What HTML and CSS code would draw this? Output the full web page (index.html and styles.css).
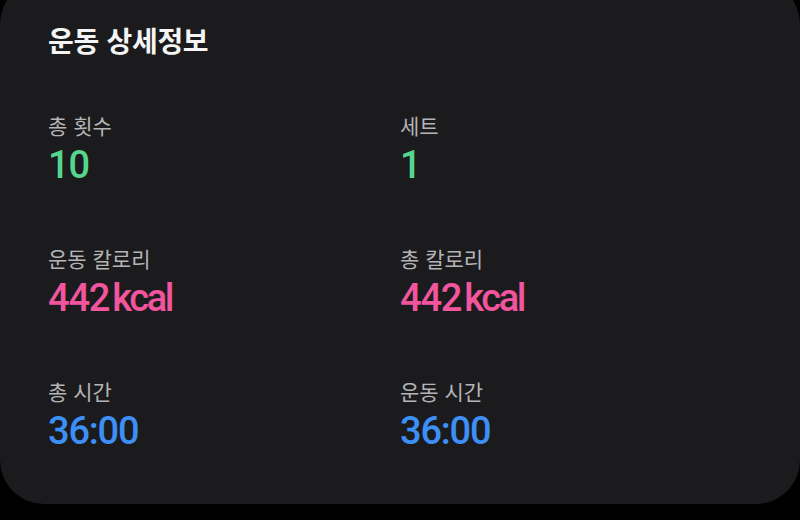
FILE: index.html
```html
<!DOCTYPE html>
<html lang="ko">
<head>
<meta charset="utf-8">
<title>운동 상세정보</title>
<link rel="stylesheet" href="styles.css">
</head>
<body>
  <section class="card">
    <h1 class="card-title">운동 상세정보</h1>
    <div class="stats">
      <div class="stat">
        <div class="stat-label">총 횟수</div>
        <div class="stat-value green">10</div>
      </div>
      <div class="stat">
        <div class="stat-label">세트</div>
        <div class="stat-value green">1</div>
      </div>
      <div class="stat">
        <div class="stat-label">운동 칼로리</div>
        <div class="stat-value pink">442<span class="unit">kcal</span></div>
      </div>
      <div class="stat">
        <div class="stat-label">총 칼로리</div>
        <div class="stat-value pink">442<span class="unit">kcal</span></div>
      </div>
      <div class="stat">
        <div class="stat-label">총 시간</div>
        <div class="stat-value blue">36:00</div>
      </div>
      <div class="stat">
        <div class="stat-label">운동 시간</div>
        <div class="stat-value blue">36:00</div>
      </div>
    </div>
  </section>
</body>
</html>
```

FILE: styles.css
```css
html, body {
  margin: 0;
  padding: 0;
  background: #000;
}

body {
  width: 800px;
  height: 520px;
  overflow: hidden;
  font-family: "Noto Sans CJK KR", "Noto Sans", sans-serif;
}

.card {
  margin-top: -20px;
  height: 524px;
  box-sizing: border-box;
  padding: 44px 48px 0 48px;
  background: #1b1b1d;
  border-radius: 44px;
}

.card-title {
  margin: 0;
  font-size: 28px;
  line-height: 32px;
  font-weight: 700;
  color: #f4f4f4;
  letter-spacing: -0.3px;
}

.stats {
  margin-top: 57px;
  display: grid;
  grid-template-columns: 352px 352px;
  grid-auto-rows: 133px;
}

.stat-label {
  font-size: 21px;
  line-height: 24px;
  color: #b4b4b6;
}

.stat-value {
  margin-top: 8px;
  font-family: "Roboto", "Noto Sans CJK KR", sans-serif;
  font-size: 38px;
  font-weight: 500;
  line-height: 40px;
  letter-spacing: -1.2px;
}

.unit {
  margin-left: 3px;
  letter-spacing: -2.4px;
}

.green { color: #55d68f; }
.pink { color: #f0559e; }
.blue { color: #3d8ff5; }
```
